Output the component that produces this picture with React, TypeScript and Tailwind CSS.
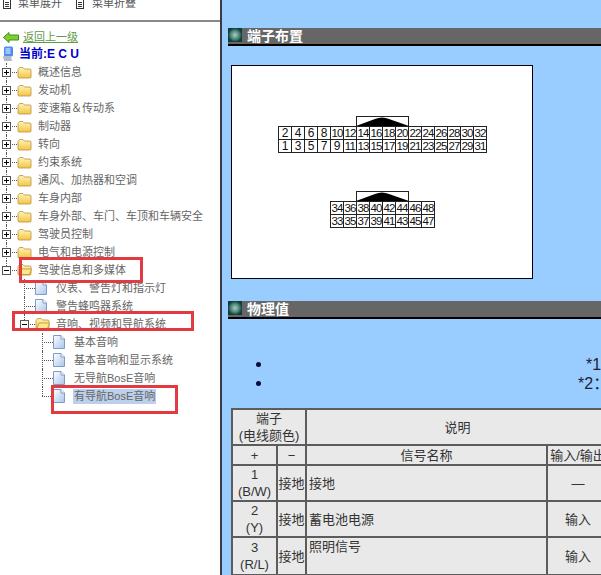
import { useId } from "react";

const treeRows = [
  { label: "概述信息", depth: 0, kind: "closed" },
  { label: "发动机", depth: 0, kind: "closed" },
  { label: "变速箱＆传动系", depth: 0, kind: "closed" },
  { label: "制动器", depth: 0, kind: "closed" },
  { label: "转向", depth: 0, kind: "closed" },
  { label: "约束系统", depth: 0, kind: "closed" },
  { label: "通风、加热器和空调", depth: 0, kind: "closed" },
  { label: "车身内部", depth: 0, kind: "closed" },
  { label: "车身外部、车门、车顶和车辆安全", depth: 0, kind: "closed" },
  { label: "驾驶员控制", depth: 0, kind: "closed" },
  { label: "电气和电源控制", depth: 0, kind: "closed" },
  { label: "驾驶信息和多媒体", depth: 0, kind: "open", last: true },
  { label: "仪表、警告灯和指示灯", depth: 1, kind: "file" },
  { label: "警告蜂鸣器系统", depth: 1, kind: "file" },
  { label: "音响、视频和导航系统", depth: 1, kind: "open", last: true },
  { label: "基本音响", depth: 2, kind: "file" },
  { label: "基本音响和显示系统", depth: 2, kind: "file" },
  { label: "无导航BosE音响", depth: 2, kind: "file" },
  { label: "有导航BosE音响", depth: 2, kind: "file", last: true, selected: true },
];

const depthPadding = ["pl-0", "pl-[18px]", "pl-[36px]"];

const FolderIcon = ({ open }: { open: boolean }) => {
  const id = useId();
  return (
    <svg width="15" height="13" viewBox="0 0 15 13" className={`shrink-0 ${open ? "-mt-[2px]" : ""}`}>
      <defs>
        <linearGradient id={id} x1="0" y1="0" x2="0" y2="1">
          <stop offset="0" stopColor="#fff3b8" />
          <stop offset="1" stopColor="#f4c545" />
        </linearGradient>
      </defs>
      <path d="M1 3.5 L2.5 1.5 H6 L7.5 3 H13 Q14 3 14 4 V11 Q14 12 13 12 H2 Q1 12 1 11 Z" fill={`url(#${id})`} stroke="#b8923c" strokeWidth="0.8" />
      {open && <path d="M2 11.5 L4 6 H14.5 L12.5 11.5 Z" fill="#ffe88a" stroke="#b8923c" strokeWidth="0.8" />}
    </svg>
  );
};

const FileIcon = () => {
  const id = useId();
  return (
    <svg width="12" height="14" viewBox="0 0 12 14" className="shrink-0">
      <defs>
        <linearGradient id={id} x1="0" y1="0" x2="1" y2="1">
          <stop offset="0" stopColor="#ffffff" />
          <stop offset="1" stopColor="#a9c4ea" />
        </linearGradient>
      </defs>
      <path d="M0.5 0.5 H8 L11.5 4 V13.5 H0.5 Z" fill={`url(#${id})`} stroke="#7f9cc8" />
      <path d="M8 0.5 V4 H11.5" fill="#fff" stroke="#7f9cc8" />
    </svg>
  );
};

const ToolIcon = () => (
  <svg width="8" height="10" viewBox="0 0 8 10" className="shrink-0">
    <rect x="0.5" y="0.5" width="7" height="9" fill="#fff" stroke="#333" />
    <path d="M2 3.5 H6 M2 5.5 H6 M2 7.5 H6" stroke="#333" />
  </svg>
);

const TreeRow = ({ row }: { row: (typeof treeRows)[number] }) => {
  const isFile = row.kind === "file";
  return (
    <div className={`flex h-[18px] items-center ${depthPadding[row.depth]}`}>
      <div className="relative h-full w-[17px] shrink-0">
        <span className={`absolute left-[6px] top-0 border-l border-dotted border-[#555] ${row.last ? "h-[9px]" : "h-full"}`} />
        <span className="absolute left-[6px] top-[9px] w-[11px] border-t border-dotted border-[#555]" />
        {!isFile && (
          <span className="absolute left-[2px] top-[5px] flex h-[9px] w-[9px] items-center justify-center border border-[#555] bg-white">
            <span className="absolute h-px w-[5px] bg-black" />
            {row.kind === "closed" && <span className="absolute h-[5px] w-px bg-black" />}
          </span>
        )}
      </div>
      <div className="flex w-[21px] shrink-0 items-center">
        {isFile ? <FileIcon /> : <FolderIcon open={row.kind === "open"} />}
      </div>
      <span className={`whitespace-nowrap text-[11px] leading-[15px] text-[#666] ${row.selected ? "bg-[#bcd0ec] -ml-[1px] px-px" : ""}`}>
        {row.label}
      </span>
    </div>
  );
};

const Sidebar = () => (
  <aside className="relative w-[220px] shrink-0 overflow-hidden bg-white">
    <div className="box-content flex h-[20px] items-start border-b-2 border-[#888] pl-[3px]">
      <div className="-mt-[4px] flex items-center text-[11px] leading-[15px] text-[#555]">
        <ToolIcon />
        <span className="ml-[7px]">菜单展开</span>
        <span className="ml-[14px]"><ToolIcon /></span>
        <span className="ml-[8px]">菜单折叠</span>
      </div>
    </div>
    <div className="mt-[8px] flex h-[14px] items-center pl-[3px]">
      <svg width="16" height="11" viewBox="0 0 16 11" className="shrink-0">
        <path d="M0.5 5.5 L6 0.5 V3 H15.5 V8 H6 V10.5 Z" fill="#7fd02c" stroke="#3f8f17" />
      </svg>
      <a className="ml-[4px] text-[11px] leading-[14px] text-[#5f9a45] underline">返回上一级</a>
    </div>
    <div className="mt-[1px] flex h-[17px] items-center pl-[2px]">
      <svg width="12" height="16" viewBox="0 0 12 16" className="shrink-0">
        <rect x="2" y="0.5" width="9" height="10" rx="1.5" fill="#4d8df0" />
        <rect x="3.5" y="2" width="5" height="6" fill="#9cc6fa" />
        <path d="M1 10 H9 L10 15 H2 Z" fill="#b5bcc6" />
      </svg>
      <span className="ml-[5px] whitespace-pre text-[12px] font-bold leading-[16px] text-[#0000cc]">当前:E C U</span>
    </div>
    <div className="mt-[1px]">
      {treeRows.map((row) => (
        <TreeRow key={row.label} row={row} />
      ))}
    </div>
    <span className="absolute left-[19px] top-[257px] h-[26px] w-[124px] border-[3px] border-[#e23a40]" />
    <span className="absolute left-[12px] top-[311px] h-[20px] w-[182px] border-[3px] border-[#e23a40]" />
    <span className="absolute left-[51px] top-[385px] h-[29px] w-[127px] border-[3px] border-[#e23a40]" />
  </aside>
);

const SectionTitle = ({ title }: { title: string }) => {
  const id = useId();
  return (
    <div className="box-content flex h-[16px] items-center border-b-2 border-black bg-[#666]">
      <svg width="14" height="14" viewBox="0 0 14 14" className="-mt-[2px] shrink-0">
        <defs>
          <radialGradient id={id}>
            <stop offset="0" stopColor="#b5c8c0" />
            <stop offset="0.6" stopColor="#4a8a7c" />
            <stop offset="1" stopColor="#123c38" />
          </radialGradient>
        </defs>
        <rect width="14" height="14" fill={`url(#${id})`} />
      </svg>
      <span className="ml-[5px] text-[14px] font-bold leading-[16px] text-white">{title}</span>
    </div>
  );
};

const Connector = ({ x, y, top, bottom }: { x: number; y: number; top: number[]; bottom: number[] }) => (
  <g>
    {[top, bottom].map((nums, r) =>
      nums.map((n, i) => (
        <g key={n}>
          <rect x={x + i * 13 + 0.5} y={y + r * 13 + 0.5} width="13" height="13" fill="#fff" stroke="#222" />
          <text x={x + i * 13 + 7} y={y + r * 13 + 11} fontSize={n < 10 ? 12 : 11.5} textAnchor="middle" fill="#111" letterSpacing={n < 10 ? 0 : -0.8}>
            {n}
          </text>
        </g>
      ))
    )}
  </g>
);

const Key = ({ y }: { y: number }) => (
  <g>
    <rect x="124.5" y={y + 0.5} width="52" height="10" fill="#fff" stroke="#222" />
    <path d={`M124 ${y + 10} L143 ${y + 3} Q150 ${y} 157 ${y + 3} L177 ${y + 10} Z`} fill="#000" />
  </g>
);

const Diagram = () => {
  const upperTop = Array.from({ length: 16 }, (_, i) => i * 2 + 2);
  const upperBottom = Array.from({ length: 16 }, (_, i) => i * 2 + 1);
  const lowerTop = Array.from({ length: 8 }, (_, i) => i * 2 + 34);
  const lowerBottom = Array.from({ length: 8 }, (_, i) => i * 2 + 33);
  return (
    <svg width="300" height="212" viewBox="0 0 300 212" className="block">
      <Key y={50} />
      <Connector x={46} y={60} top={upperTop} bottom={upperBottom} />
      <Key y={125} />
      <Connector x={98} y={135} top={lowerTop} bottom={lowerBottom} />
    </svg>
  );
};

const cell = "border-2 border-[#5c5c5c] bg-[#e9e9e9] text-center align-middle font-normal p-0";

const DataTable = () => (
  <table className="ml-[3px] w-[377px] table-fixed border-collapse text-[13px] leading-[17px] text-[#333]">
    <colgroup>
      <col className="w-[45px]" />
      <col className="w-[29px]" />
      <col className="w-[241px]" />
      <col className="w-[62px]" />
    </colgroup>
    <tbody>
      <tr className="h-[36px]">
        <th colSpan={2} className={cell}>端子<br /><span className="whitespace-nowrap">(电线颜色)</span></th>
        <th colSpan={2} className={cell}>说明</th>
      </tr>
      <tr className="h-[20px]">
        <td className={cell}>+</td>
        <td className={cell}>−</td>
        <td className={cell}>信号名称</td>
        <td className={`${cell} whitespace-nowrap`}>输入/输出</td>
      </tr>
      <tr className="h-[36px]">
        <td className={cell}>1<br />(B/W)</td>
        <td className={cell}>接地</td>
        <td className={`${cell} pl-[2px] text-left`}>接地</td>
        <td className={cell}>—</td>
      </tr>
      <tr className="h-[36px]">
        <td className={cell}>2<br />(Y)</td>
        <td className={cell}>接地</td>
        <td className={`${cell} pl-[2px] text-left`}>蓄电池电源</td>
        <td className={cell}>输入</td>
      </tr>
      <tr className="h-[38px]">
        <td className={cell}>3<br />(R/L)</td>
        <td className={cell}>接地</td>
        <td className={`${cell} pl-[2px] text-left !align-top`}>照明信号</td>
        <td className={cell}>输入</td>
      </tr>
    </tbody>
  </table>
);

const Bullet = ({ text, indent }: { text: string; indent: string }) => (
  <li className="flex h-[19px] items-center">
    <span className="ml-[28px] h-[5px] w-[5px] shrink-0 rounded-full bg-[#0a0a3c]" />
    <span className={`${indent} whitespace-nowrap text-[16px] text-[#223]`}>{text}</span>
  </li>
);

export default function App() {
  return (
    <div className="flex h-[575px] w-[601px] overflow-hidden [font-family:'Liberation_Sans','Noto_Sans_CJK_SC',sans-serif]">
      <Sidebar />
      <main className="h-full w-[381px] shrink-0 overflow-hidden border-l-2 border-[#3a3a44] bg-[#99ccff] pl-[6px] pt-[28px]">
        <SectionTitle title="端子布置" />
        <div className="ml-[3px] mt-[19px] w-[302px] border border-[#001] bg-white">
          <Diagram />
        </div>
        <div className="mt-[22px]">
          <SectionTitle title="物理值" />
        </div>
        <ul className="mt-[36px]">
          <Bullet text="*1：带导航" indent="ml-[325px]" />
          <Bullet text="*2：无导航" indent="ml-[317px]" />
        </ul>
        <div className="mt-[15px]">
          <DataTable />
        </div>
      </main>
    </div>
  );
}
